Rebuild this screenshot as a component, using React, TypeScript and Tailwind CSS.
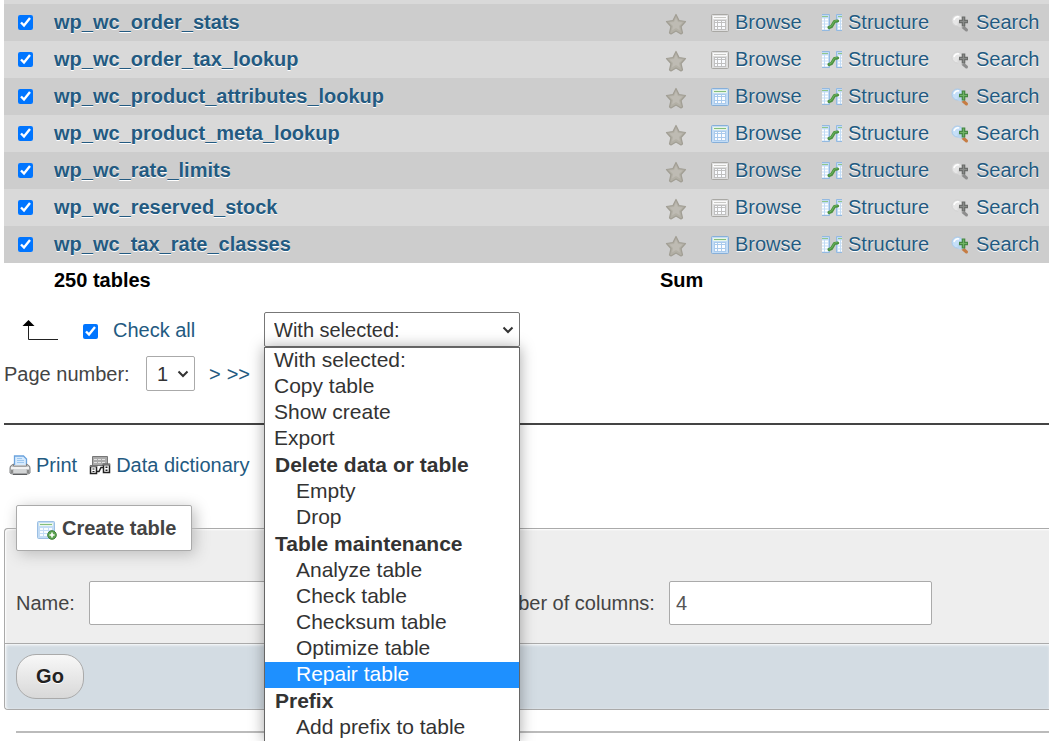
import { useState } from 'react'

const TABLES = [
  { name: 'wp_wc_order_stats', empty: true },
  { name: 'wp_wc_order_tax_lookup', empty: true },
  { name: 'wp_wc_product_attributes_lookup', empty: false },
  { name: 'wp_wc_product_meta_lookup', empty: false },
  { name: 'wp_wc_rate_limits', empty: true },
  { name: 'wp_wc_reserved_stock', empty: true },
  { name: 'wp_wc_tax_rate_classes', empty: false },
]

const MENU = [
  { label: '', items: ['With selected:', 'Copy table', 'Show create', 'Export'] },
  { label: 'Delete data or table', items: ['Empty', 'Drop'] },
  { label: 'Table maintenance', items: ['Analyze table', 'Check table', 'Checksum table', 'Optimize table', 'Repair table'] },
  { label: 'Prefix', items: ['Add prefix to table'] },
]

function StarIcon() {
  return (
    <svg viewBox="0 0 22 22" className="block size-[22px]" aria-hidden="true">
      <path d="M11 1.5l3 6 6.5 1-4.500 5 1.500 6.500-1.500 1L11 18l-5 3-1.500-1L6 13.500l-4.500-5 6.500-1z" fill="#b3b0a6" stroke="#a19e94" strokeWidth="1.2" strokeLinejoin="round" />
      <path d="M11 4.500l2 4.500 4.500.5-3.500 3.500 1 4.500-4-2.500-4 2.500 1-4.500-3.500-3.500L9 9z" fill="#bebbb3" />
    </svg>
  )
}

function BrowseIcon({ empty }: { empty: boolean }) {
  return (
    <svg viewBox="0 0 20 20" className="mt-0.5 size-5 shrink-0" aria-hidden="true">
      <rect x="1.5" y="1.5" width="17" height="17" rx="1" fill={empty ? '#dedede' : '#c3dcf5'} stroke={empty ? '#a9a8a4' : '#86afd9'} />
      <rect x="3" y="3" width="14" height="3" fill={empty ? '#fafafa' : '#e8f5e6'} />
      <path d="M4 4.500h12" stroke={empty ? '#c8c8c5' : '#83bd7c'} />
      <rect x="4" y="7" width="12" height="10" fill={empty ? '#c0c0c0' : '#a9caec'} />
      <path d="M5 8h2v1H5zM8 8h3v1H8zM12 8h3v1h-3zM5 10h2v3H5zM8 10h3v3H8zM12 10h3v3h-3zM5 14h2v2H5zM8 14h3v2H8zM12 14h3v2h-3z" fill="#fafcff" />
    </svg>
  )
}

function StructureIcon() {
  return (
    <svg viewBox="0 0 20 20" className="mt-0.5 size-5 shrink-0" aria-hidden="true">
      <path d="M0 1h7v17H0zM14 1h6v17h-6z" fill="#c1dbf5" />
      <path d="M0 1.500h7.500v16H0M20 1.500h-5.500v16H20" fill="none" stroke="#93b9e0" />
      <path d="M0 3.500h6M16 3.500h4" stroke="#8fc68a" />
      <path d="M0 6.500h2m1 0h3M0 9.500h2m1 0h3M0 12.500h2m1 0h3M0 15.500h2m1 0h3M16 6.500h2m1 0h1M16 9.500h2m1 0h1M16 12.500h2m1 0h1M16 15.500h2m1 0h1" stroke="#fff" strokeWidth="2" />
      <path d="M7 14.500l2.500-1 3-5 3-.5" fill="none" stroke="#4c9140" strokeWidth="3.2" strokeLinecap="round" strokeLinejoin="round" />
      <path d="M7.500 14l2-1 3-5 2.500-.5" fill="none" stroke="#69b45c" strokeLinecap="round" />
    </svg>
  )
}

function SearchIcon({ empty }: { empty: boolean }) {
  return (
    <svg viewBox="0 0 20 20" className="mt-0.5 size-5 shrink-0" aria-hidden="true">
      <path d="M12 14l3.500 3" stroke={empty ? '#8d8d8d' : '#c67c43'} strokeWidth="3" strokeLinecap="round" />
      <circle cx="6.5" cy="7.5" r="5.5" fill={empty ? '#e6e6e6' : '#c5dff8'} stroke={empty ? '#d2d2d2' : '#a9c9e9'} />
      <circle cx="10" cy="11" r="3.5" fill={empty ? '#d9d9d9' : '#b8d4ee'} />
      <path d="M3 7a4 4 0 0 1 5-3" fill="none" stroke="#fff" strokeWidth="1.5" />
      <path d="M12.500 3.500v10M8 8.500h9" stroke={empty ? '#6b6d6b' : '#458842'} strokeWidth="3.6" />
      <path d="M12.500 4.500v8M9 8.500h7" stroke={empty ? '#898b89' : '#6fb365'} strokeWidth="1.2" />
    </svg>
  )
}

function PrintIcon() {
  return (
    <svg viewBox="0 0 22 22" className="size-[22px] shrink-0" aria-hidden="true">
      <path d="M5.500 11V2h9l3 3v6" fill="#d6eafd" stroke="#6ba3dd" strokeWidth="1.3" />
      <path d="M8 4.500h5M8 6.500h7M8 8.500h7" stroke="#9dc7ef" />
      <path d="M1.500 12l3-2v2h13v-2l3 2 .5 2v5l-2 1H3l-2-1v-5z" fill="#c3c4c5" stroke="#808284" />
      <path d="M2 14h18" stroke="#f2f2f2" strokeWidth="2" />
      <path d="M5 15h12v4H5z" fill="#d3d5d6" />
      <path d="M4 20.500h14" stroke="#5b5d5f" />
      <path d="M3 16v3M19 16v3" stroke="#777" strokeWidth="1.5" />
    </svg>
  )
}

function DictionaryIcon() {
  return (
    <svg viewBox="0 0 22 22" className="size-[22px] shrink-0" aria-hidden="true">
      <path d="M3.500 2.500h15v9h-15z" fill="#aaa" stroke="#777" />
      <path d="M5 5.500h12M5 8.500h12" stroke="#e2e2e2" strokeDasharray="3 1" />
      <path d="M1.500 12.500h6v7h-6zM14.500 10.500h6v8h-6z" fill="#fff" stroke="#222" strokeWidth="1.5" />
      <path d="M1 12h7M14 10.500h7" stroke="#777" strokeWidth="2" />
      <path d="M4.500 14.500v1M4.500 17v1M17.500 12.500v1.500M17.500 15.500v1.500" stroke="#222" strokeWidth="2" />
      <path d="M8 17.500h2l2-4h2" fill="none" stroke="#222" strokeWidth="1.5" />
    </svg>
  )
}

function CreateIcon() {
  return (
    <svg viewBox="0 0 20 20" className="mt-1 size-5 shrink-0" aria-hidden="true">
      <rect x=".5" y="1.5" width="17" height="17" rx="1" fill="#c3dcf5" stroke="#9bbfe3" />
      <path d="M2 3h14v3H2z" fill="#eaf6e9" />
      <path d="M3 4.500h12" stroke="#83bd7c" />
      <path d="M3 8h3v2H3zM7 8h4v2H7zM12 8h3v2h-3zM3 11h3v2H3zM7 11h4v2H7zM3 14h3v2H3zM7 14h3v2H7z" fill="#f8fcff" />
      <circle cx="15" cy="15" r="4.3" fill="#5da552" stroke="#3e7e38" />
      <path d="M15 12.500v5M12.500 15h5" stroke="#fff" strokeWidth="1.6" />
    </svg>
  )
}

function Chevron() {
  return (
    <svg viewBox="0 0 12 8" className="pointer-events-none absolute top-1/2 right-[6px] h-2 w-3 -translate-y-1/2" aria-hidden="true">
      <path d="M1.500 1.500L6 6l4.500-4.500" fill="none" stroke="#333" strokeWidth="2" />
    </svg>
  )
}

export default function App() {
  const [checked, setChecked] = useState(TABLES.map(() => true))
  const [action, setAction] = useState('With selected:')
  const [open, setOpen] = useState(true)
  const allChecked = checked.every(Boolean)

  const toggle = (i: number) => setChecked(c => c.map((v, n) => (n === i ? !v : v)))

  const pick = (item: string) => {
    setAction(item)
    setOpen(false)
  }

  return (
    <main className="relative min-h-screen overflow-hidden bg-white pl-1 font-['Liberation_Sans',Arial,sans-serif] text-xl leading-6 text-[#444]">
      <div className="h-1 bg-[#d9d9d9]" />
      <table className="w-full table-fixed border-collapse">
        <colgroup>
          <col className="w-[50px]" />
          <col />
          <col className="w-[50px]" />
          <col className="w-[111px]" />
          <col className="w-[130px]" />
          <col className="w-[98px]" />
        </colgroup>
        <tbody>
          {TABLES.map((t, i) => (
            <tr key={t.name} className="h-[37px] odd:bg-[#cdcdcd] even:bg-[#d9d9d9] text-[#235a81] [text-shadow:0_1px_0_#fff]">
              <td className="p-0 pl-[14px]">
                <input type="checkbox" aria-label={t.name} checked={checked[i]} onChange={() => toggle(i)} className="block size-[15px] accent-[#0075ff]" />
              </td>
              <th className="p-0 pb-0.5 text-left font-bold"><a href="#browse">{t.name}</a></th>
              <td className="p-0 pt-0.5 pl-[5px]"><a href="#favorite" aria-label="Add to favorites"><StarIcon /></a></td>
              <td className="p-0 pb-0.5"><a href="#browse" className="flex items-center gap-[5px]"><BrowseIcon empty={t.empty} />Browse</a></td>
              <td className="p-0 pb-0.5 pl-px"><a href="#structure" className="flex items-center gap-[6px]"><StructureIcon />Structure</a></td>
              <td className="p-0 pb-0.5"><a href="#search" className="flex items-center gap-[5px]"><SearchIcon empty={t.empty} />Search</a></td>
            </tr>
          ))}
        </tbody>
        <tfoot>
          <tr className="h-[35px] text-left text-black">
            <td />
            <th className="p-0 pb-0.5">250 tables</th>
            <th className="p-0 pb-0.5" colSpan={4}>Sum</th>
          </tr>
        </tfoot>
      </table>

      <div className="mt-[14px] flex h-[35px] items-center">
        <svg viewBox="0 0 38 22" className="ml-[17px] h-[22px] w-[38px]" aria-hidden="true">
          <path d="M7.500 3v17.500H37" fill="none" stroke="#222" />
          <path d="M7.500 1l6 6h-12z" fill="#000" />
        </svg>
        <label className="ml-6 flex w-[181px] items-center gap-[15px] text-[#235a81]">
          <input type="checkbox" checked={allChecked} onChange={() => setChecked(TABLES.map(() => !allChecked))} className="mt-1 size-[15px] accent-[#0075ff]" />
          Check all
        </label>
        <div className="relative w-64">
          <select
            aria-label="With selected"
            value={action}
            onChange={e => setAction(e.target.value)}
            onMouseDown={e => { e.preventDefault(); setOpen(!open) }}
            className="block h-[35px] w-full appearance-none rounded-xs border border-[#777] bg-white pl-[9px] text-[#333]"
          >
            {MENU.flatMap(g => g.items).map(item => <option key={item}>{item}</option>)}
          </select>
          <Chevron />
          {open && (
            <div role="listbox" aria-label="Actions" className="absolute top-full left-0 z-10 w-full border border-b-0 border-[#666] bg-white text-[21px] text-[#333] shadow-[0_0_14px_rgba(0,0,0,0.35)]">
              {MENU.map((g, n) => (
                <div key={n} role="group" className="mt-px first:mt-0">
                  {g.label && <div className="h-[26px] pl-[10px] leading-6 font-bold">{g.label}</div>}
                  {g.items.map(item => (
                    <button
                      key={item}
                      type="button"
                      role="option"
                      aria-selected={item === 'Repair table'}
                      onClick={() => pick(item)}
                      className={`block h-[26px] w-full pb-0.5 text-left leading-6 ${g.label ? 'pl-[31px]' : 'pl-[9px]'} ${item === 'Repair table' ? 'bg-[#1e90ff] text-white' : ''}`}
                    >
                      {item}
                    </button>
                  ))}
                </div>
              ))}
            </div>
          )}
        </div>
      </div>

      <div className="mt-[9px] flex h-[35px] items-center">
        <label htmlFor="page" className="w-[142px]">Page number:</label>
        <div className="relative w-[49px]">
          <select id="page" className="block h-[35px] w-full appearance-none rounded-xs border border-[#aaa] bg-white pl-[10px] text-[#333]">
            <option>1</option>
          </select>
          <Chevron />
        </div>
        <a href="#next" className="ml-[14px] text-[#235a81]">&gt;</a>
        <a href="#last" className="ml-[6px] text-[#235a81]">&gt;&gt;</a>
      </div>

      <hr className="mt-8 border-t-2 border-[#444]" />

      <div className="mt-7 flex items-center gap-3 pl-[5px] text-[#235a81]">
        <a href="#print" className="flex items-center gap-[5px]"><PrintIcon />Print</a>
        <a href="#dictionary" className="flex items-center gap-[5px]"><DictionaryIcon />Data dictionary</a>
      </div>

      <form onSubmit={e => e.preventDefault()} className="mt-7">
        <fieldset className="rounded-l border border-r-0 border-[#aaa] bg-[#eee] [box-shadow:inset_1px_1px_2px_#fff]">
          <legend className="ml-[11px] flex h-[46px] items-center gap-[5px] rounded-xs border border-[#aaa] bg-white pr-[14px] pl-5 font-bold shadow-[3px_3px_15px_#bbb]">
            <CreateIcon />Create table
          </legend>
          <div className="flex items-center px-[11px] pt-[30px] pb-[18px]">
            <label htmlFor="name">Name:</label>
            <input id="name" type="text" className="ml-[14px] h-11 w-[263px] rounded-xs border border-[#aaa] bg-white px-[6px]" />
            <label htmlFor="columns" className="ml-[124px]">Number of columns:</label>
            <input id="columns" type="text" defaultValue="4" className="ml-[14px] h-11 w-[263px] rounded-xs border border-[#aaa] bg-white px-[6px] text-[#555]" />
          </div>
          <div className="rounded-bl border-t border-[#aaa] bg-[#d3dce3] px-[11px] py-[10px] [box-shadow:inset_1px_1px_3px_#fff]">
            <button type="submit" className="h-[45px] w-[68px] rounded-[20px] border border-[#aaa] bg-linear-to-b from-[#f8f8f8] to-[#d8d8d8] pb-0.5 font-bold text-[#222] [text-shadow:0_1px_0_#fff]">Go</button>
          </div>
        </fieldset>
      </form>

      <hr className="mt-[21px] ml-3 border-t-2 border-[#bbb]" />
    </main>
  )
}
